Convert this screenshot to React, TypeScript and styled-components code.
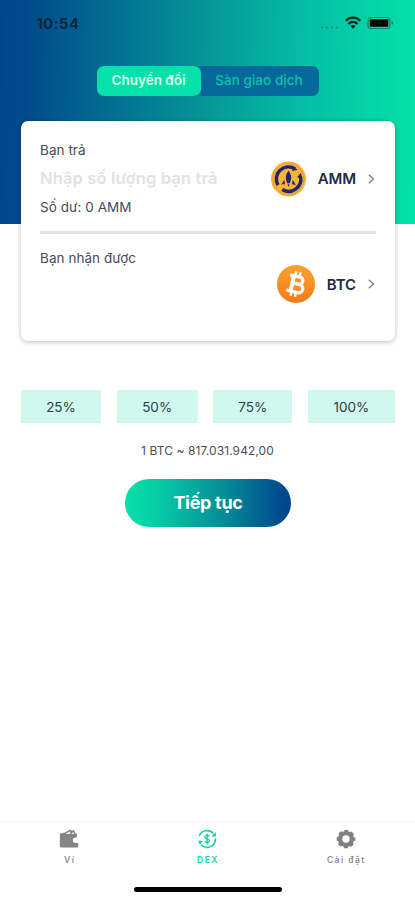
import React from "react";
import styled, { createGlobalStyle } from "styled-components";

const GlobalStyle = createGlobalStyle`
  * { box-sizing: border-box; }
  body { margin: 0; background: #fff; font-family: Inter, "Liberation Sans", sans-serif; }
  button { font: inherit; border: 0; padding: 0; background: none; cursor: pointer; }
  svg { display: block; flex: none; }
`;

const Screen = styled.main`
  width: 415px;
  height: 900px;
  display: flex;
  flex-direction: column;
  background: #fff;
  overflow: hidden;
`;

const Hero = styled.header`
  height: 224px;
  flex: none;
  background: linear-gradient(91deg, #00458b 0%, #004b8c 7%, #069a99 52%, #04bea4 73%, #04e2aa 100%);
`;

const StatusBar = styled.div`
  height: 65.5px;
  padding: 13px 20px 0 36.5px;
  display: flex;
  align-items: flex-start;
  justify-content: space-between;
`;

const Clock = styled.time`
  font-size: 15px;
  line-height: 21px;
  font-weight: 600;
  letter-spacing: 0.5px;
  color: #062131;
`;

const Segments = styled.nav`
  width: 222px;
  height: 30px;
  margin: 0 auto;
  display: flex;
  border-radius: 7px;
  background: #05679a;
`;

const Segment = styled.button<{ $active?: boolean }>`
  width: ${(p) => (p.$active ? 104 : 117)}px;
  height: 30px;
  padding-bottom: 1px;
  border-radius: 7px;
  font-size: 13.5px;
  font-weight: ${(p) => (p.$active ? 600 : 500)};
  letter-spacing: ${(p) => (p.$active ? 0 : 0.05)}px;
  white-space: nowrap;
  color: ${(p) => (p.$active ? "#d9fff0" : "#08c3ad")};
  background: ${(p) => (p.$active ? "#06e1aa" : "transparent")};
`;

const Card = styled.section`
  flex: none;
  width: 374px;
  height: 220px;
  margin: -103px 0 0 21px;
  padding: 0 19px;
  border-radius: 7px;
  background: #fff;
  box-shadow: 0 1px 5px rgba(0, 0, 0, 0.27);
`;

const SwapRow = styled.div<{ $height: number }>`
  height: ${(p) => p.$height}px;
  display: flex;
  justify-content: space-between;
`;

const Fields = styled.div<{ $top: number }>`
  padding-top: ${(p) => p.$top}px;
  display: flex;
  flex-direction: column;
`;

const Label = styled.span`
  height: 20px;
  font-size: 13.5px;
  line-height: 20px;
  letter-spacing: 0.05px;
  color: #454b5b;
  white-space: nowrap;
`;

const AmountHint = styled.span`
  height: 37px;
  font-size: 16.5px;
  line-height: 37px;
  font-weight: 600;
  letter-spacing: 0.15px;
  color: #e2e2e4;
  white-space: nowrap;
`;

const CoinPicker = styled.button<{ $top: number; $gap: number }>`
  height: 40px;
  margin-top: ${(p) => p.$top}px;
  display: flex;
  align-items: center;
  gap: ${(p) => p.$gap}px;
`;

const CoinName = styled.span`
  display: flex;
  align-items: center;
  gap: 12px;
  font-size: 15px;
  font-weight: 600;
  letter-spacing: -0.1px;
  color: #202a48;
`;

const Divider = styled.hr`
  width: 336px;
  height: 3px;
  margin: 0;
  border: 0;
  background: #e2e2e4;
`;

const Percents = styled.div`
  flex: none;
  margin: 49px 20px 0 21px;
  height: 33px;
  display: grid;
  grid-template-columns: 80px 81px 79px 87px;
  justify-content: space-between;
`;

const Percent = styled.button`
  background: #d0f8ee;
  color: #303c42;
  font-size: 13.5px;
`;

const Rate = styled.p`
  margin: 18px 0 0;
  height: 20px;
  line-height: 20px;
  font-size: 12px;
  letter-spacing: 0.08px;
  text-align: center;
  color: #4a4e5c;
`;

const Continue = styled.button`
  flex: none;
  width: 166px;
  height: 48px;
  margin: 18px 0 0 125px;
  padding-bottom: 1px;
  border-radius: 24px;
  font-size: 18px;
  font-weight: 700;
  letter-spacing: -0.3px;
  color: #fff;
  background: linear-gradient(92deg, #06e0aa 0%, #06cfa6 18%, #058f98 58%, #00468c 96%);
`;

const TabBar = styled.nav`
  flex: none;
  height: 66px;
  margin-top: auto;
  padding-top: 7px;
  display: grid;
  grid-template-columns: repeat(3, 1fr);
  border-top: 1px solid #f7f7f7;
`;

const Tab = styled.button<{ $active?: boolean }>`
  height: 42px;
  display: flex;
  flex-direction: column;
  align-items: center;
  gap: 5px;
  font-size: 8.5px;
  line-height: 12px;
  font-weight: 600;
  letter-spacing: 1.45px;
  color: ${(p) => (p.$active ? "#18d39c" : "#8c8c8c")};
`;

const TabLabel = styled.span`
  padding-left: 1px;
`;

const HomeIndicator = styled.div`
  flex: none;
  width: 148px;
  height: 5px;
  margin: 0 auto 8px;
  border-radius: 3px;
  background: #000;
`;

const StatusIcons = () => (
  <svg width="77" height="22" viewBox="0 0 77 22">
    <g fill="#087f80" opacity="0.75">
      <circle cx="4" cy="14.5" r="1.1" />
      <circle cx="9" cy="14.5" r="1.1" />
      <circle cx="14" cy="14.5" r="1.1" />
      <circle cx="19" cy="14.5" r="1.1" />
    </g>
    <g fill="none" stroke="#03231f" strokeWidth="2.2">
      <path d="M27.7 7.7a10.2 10.2 0 0 1 14.6 0" />
      <path d="M30.5 10.9a6.1 6.1 0 0 1 9 0" />
    </g>
    <path d="M35 15.8l-2.6-2.7a3.8 3.8 0 0 1 5.2 0z" fill="#03231f" />
    <rect x="50" y="4.5" width="22" height="11" rx="3" fill="none" stroke="#078a70" strokeWidth="1.2" />
    <rect x="51.7" y="6.2" width="18.6" height="7.6" rx="1" fill="#000" />
    <path d="M73.5 8c2.4.8 2.4 3.2 0 4z" fill="#078a70" />
  </svg>
);

const Chevron = () => (
  <svg width="8" height="12" viewBox="0 0 8 12" fill="none" stroke="#7a7d91" strokeWidth="1.3">
    <path d="M0.8 1.7L5.5 6L0.8 10.3" />
  </svg>
);

const AmmLogo = () => (
  <svg width="36" height="36" viewBox="0 0 36 36">
    <circle cx="18.5" cy="18" r="17.5" fill="#f8b338" />
    <circle cx="18.5" cy="18" r="15.5" fill="none" stroke="#d9a050" strokeWidth="1" />
    <g fill="none" stroke="#20266a" strokeWidth="3.4">
      <path d="M8 24.2A12.2 12.2 0 0 1 25 7.7" />
      <path d="M30.5 15.5A12.2 12.2 0 0 1 12.2 28.5" />
    </g>
    <path d="M22.5 5.2l5.2 3.6-5.3 1.2zM30.8 11.8l1.4 5.7-5-1.3z" fill="#20266a" />
    <path d="M18.5 9.8c3.6 4.8 3.1 8 1.3 12.4h-2.6c-1.8-4.4-2.3-7.6 1.3-12.4z" fill="#20266a" />
    <path d="M14.3 18.8l-3.2 5.2 3.8-.7zM22.7 18.8l3.2 5.2-3.8-.7zM17.5 23.3h2l-1 2.8z" fill="#20266a" />
    <path d="M7 29.5l6.2-6.2" stroke="#f8b338" strokeWidth="1.5" />
  </svg>
);

const BtcLogo = () => (
  <svg width="38" height="38" viewBox="0 0 38 38">
    <defs>
      <linearGradient id="coin" x1="0" y1="0" x2="0" y2="1">
        <stop offset="0" stopColor="#fca32d" />
        <stop offset="1" stopColor="#f27a1d" />
      </linearGradient>
    </defs>
    <circle cx="19" cy="19" r="19" fill="url(#coin)" />
    <g transform="translate(0 .2) rotate(13 19 19)" fill="none" stroke="#fff">
      <path d="M11 11.2h10.4a3.6 3.6 0 0 1 0 7.2h-5.4M15.4 18.6h7.2a4.1 4.1 0 0 1 0 8.2H11" strokeWidth="3.3" />
      <path d="M15.2 11v15.5" strokeWidth="4" />
      <path d="M16.3 6.3v4M20.8 6.3v4M16.3 27.5v4M20.8 27.5v4" strokeWidth="2.5" />
    </g>
  </svg>
);

const WalletIcon = () => (
  <svg width="20" height="20" viewBox="0 0 20 20">
    <path
      d="M1 4.4L5.5 3.8 10.8.8 13.2 1.8 14.6.8 16.7 4.4H17.9V8.6H16.6a2.7 2.7 0 0 0 0 5.4h2.6v3.4a1.1 1.1 0 0 1-1.1 1.1H2.2A1.4 1.4 0 0 1 .8 17.1z"
      fill="#858585"
    />
    <path d="M6.4 4.9l4.2-2.5 1 2.3zM12.6 4.8l1.5-1.9 1.2 2z" fill="#fff" />
  </svg>
);

const ExchangeIcon = () => (
  <svg width="20" height="20" viewBox="0 0 20 20" fill="none" stroke="#18d39c" strokeWidth="1.6">
    <path d="M2.2 7A8.4 8.4 0 0 1 16.4 4.6" />
    <path d="M18.4 9.4A8.4 8.4 0 0 1 4 15.8" />
    <path d="M18.9 3v4.4h-4.6zM1.1 11.4l5 .5-3.4 3.6z" fill="#18d39c" stroke="none" />
    <path d="M12.4 7.2c-1-1.2-4.6-1.3-4.6.8 0 2.5 4.7 1.3 4.7 3.8 0 2.2-3.9 2.1-5 .7M10.1 4.6v10.8" strokeWidth="1.4" />
  </svg>
);

const GearIcon = () => (
  <svg width="20" height="20" viewBox="0 0 20 20">
    <circle cx="10" cy="10" r="5.9" fill="none" stroke="#808080" strokeWidth="4.4" />
    <circle cx="10" cy="10" r="8" fill="none" stroke="#808080" strokeWidth="2.6" strokeDasharray="3.7 2.583" strokeDashoffset="1.85" />
  </svg>
);

export default function App() {
  return (
    <>
      <GlobalStyle />
      <Screen>
        <Hero>
          <StatusBar>
            <Clock>10:54</Clock>
            <StatusIcons />
          </StatusBar>
          <Segments>
            <Segment $active>Chuyển đổi</Segment>
            <Segment>Sàn giao dịch</Segment>
          </Segments>
        </Hero>
        <Card>
          <SwapRow $height={110}>
            <Fields $top={19}>
              <Label>Bạn trả</Label>
              <AmountHint>Nhập số lượng bạn trả</AmountHint>
              <Label>Số dư: 0 AMM</Label>
            </Fields>
            <CoinPicker $top={37.5} $gap={12}>
              <AmmLogo />
              <CoinName>
                AMM
                <Chevron />
              </CoinName>
            </CoinPicker>
          </SwapRow>
          <Divider />
          <SwapRow $height={107}>
            <Fields $top={13.5}>
              <Label>Bạn nhận được</Label>
            </Fields>
            <CoinPicker $top={30} $gap={12}>
              <BtcLogo />
              <CoinName>
                BTC
                <Chevron />
              </CoinName>
            </CoinPicker>
          </SwapRow>
        </Card>
        <Percents>
          {["25%", "50%", "75%", "100%"].map((value) => (
            <Percent key={value}>{value}</Percent>
          ))}
        </Percents>
        <Rate>1 BTC ~ 817.031.942,00</Rate>
        <Continue>Tiếp tục</Continue>
        <TabBar>
          <Tab>
            <WalletIcon />
            <TabLabel>Ví</TabLabel>
          </Tab>
          <Tab $active>
            <ExchangeIcon />
            <TabLabel>DEX</TabLabel>
          </Tab>
          <Tab>
            <GearIcon />
            <TabLabel>Cài đặt</TabLabel>
          </Tab>
        </TabBar>
        <HomeIndicator />
      </Screen>
    </>
  );
}
